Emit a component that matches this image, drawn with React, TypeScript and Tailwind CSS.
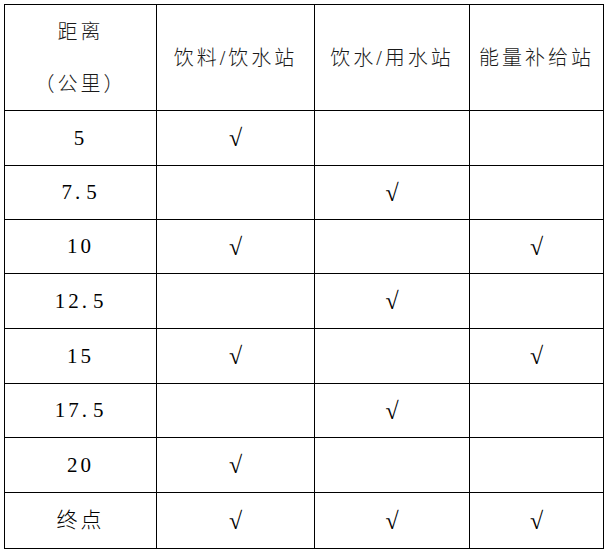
const rows: { km: string; drink: boolean; water: boolean; energy: boolean }[] = [
  { km: '5', drink: true, water: false, energy: false },
  { km: '7.5', drink: false, water: true, energy: false },
  { km: '10', drink: true, water: false, energy: true },
  { km: '12.5', drink: false, water: true, energy: false },
  { km: '15', drink: true, water: false, energy: true },
  { km: '17.5', drink: false, water: true, energy: false },
  { km: '20', drink: true, water: false, energy: false },
  { km: '终点', drink: true, water: true, energy: true },
];

function Km({ value }: { value: string }) {
  const parts = value.split('.');
  if (parts.length < 2) return <span className="text-[21px] text-black">{value}</span>;
  return (
    <span className="text-[21px] text-black">
      {parts[0]}
      <span className="mr-[3px]">.</span>
      {parts[1]}
    </span>
  );
}

function Cell({ children }: { children?: React.ReactNode }) {
  return (
    <div className="flex items-center justify-center border-r border-b border-black text-center">
      {children}
    </div>
  );
}

function Tick({ on }: { on: boolean }) {
  return (
    <Cell>
      {on ? <span className="text-[24px] tracking-normal text-black">√</span> : null}
    </Cell>
  );
}

export default function App() {
  return (
    <div className="min-h-[554px] w-[607px] bg-white pl-[4px] pt-[4px]">
      <div className="grid w-[600px] grid-cols-[152px_158px_155px_134px] grid-rows-[106px_55px_54px_54px_55px_55px_54px_55px_56px] border-l border-t border-black [font-family:Liberation_Serif,Noto_Sans_CJK_SC,serif] text-[20px] leading-none font-light tracking-[3px] text-[#1a1a1a]">
        <Cell>
          <div className="flex flex-col items-center leading-[52px]">
            <span>距离</span>
            <span>（公里）</span>
          </div>
        </Cell>
        <Cell>饮料/饮水站</Cell>
        <Cell>饮水/用水站</Cell>
        <Cell>能量补给站</Cell>

        {rows.map((r) => (
          <div key={r.km} className="contents">
            <Cell>
              <Km value={r.km} />
            </Cell>
            <Tick on={r.drink} />
            <Tick on={r.water} />
            <Tick on={r.energy} />
          </div>
        ))}
      </div>
    </div>
  );
}
